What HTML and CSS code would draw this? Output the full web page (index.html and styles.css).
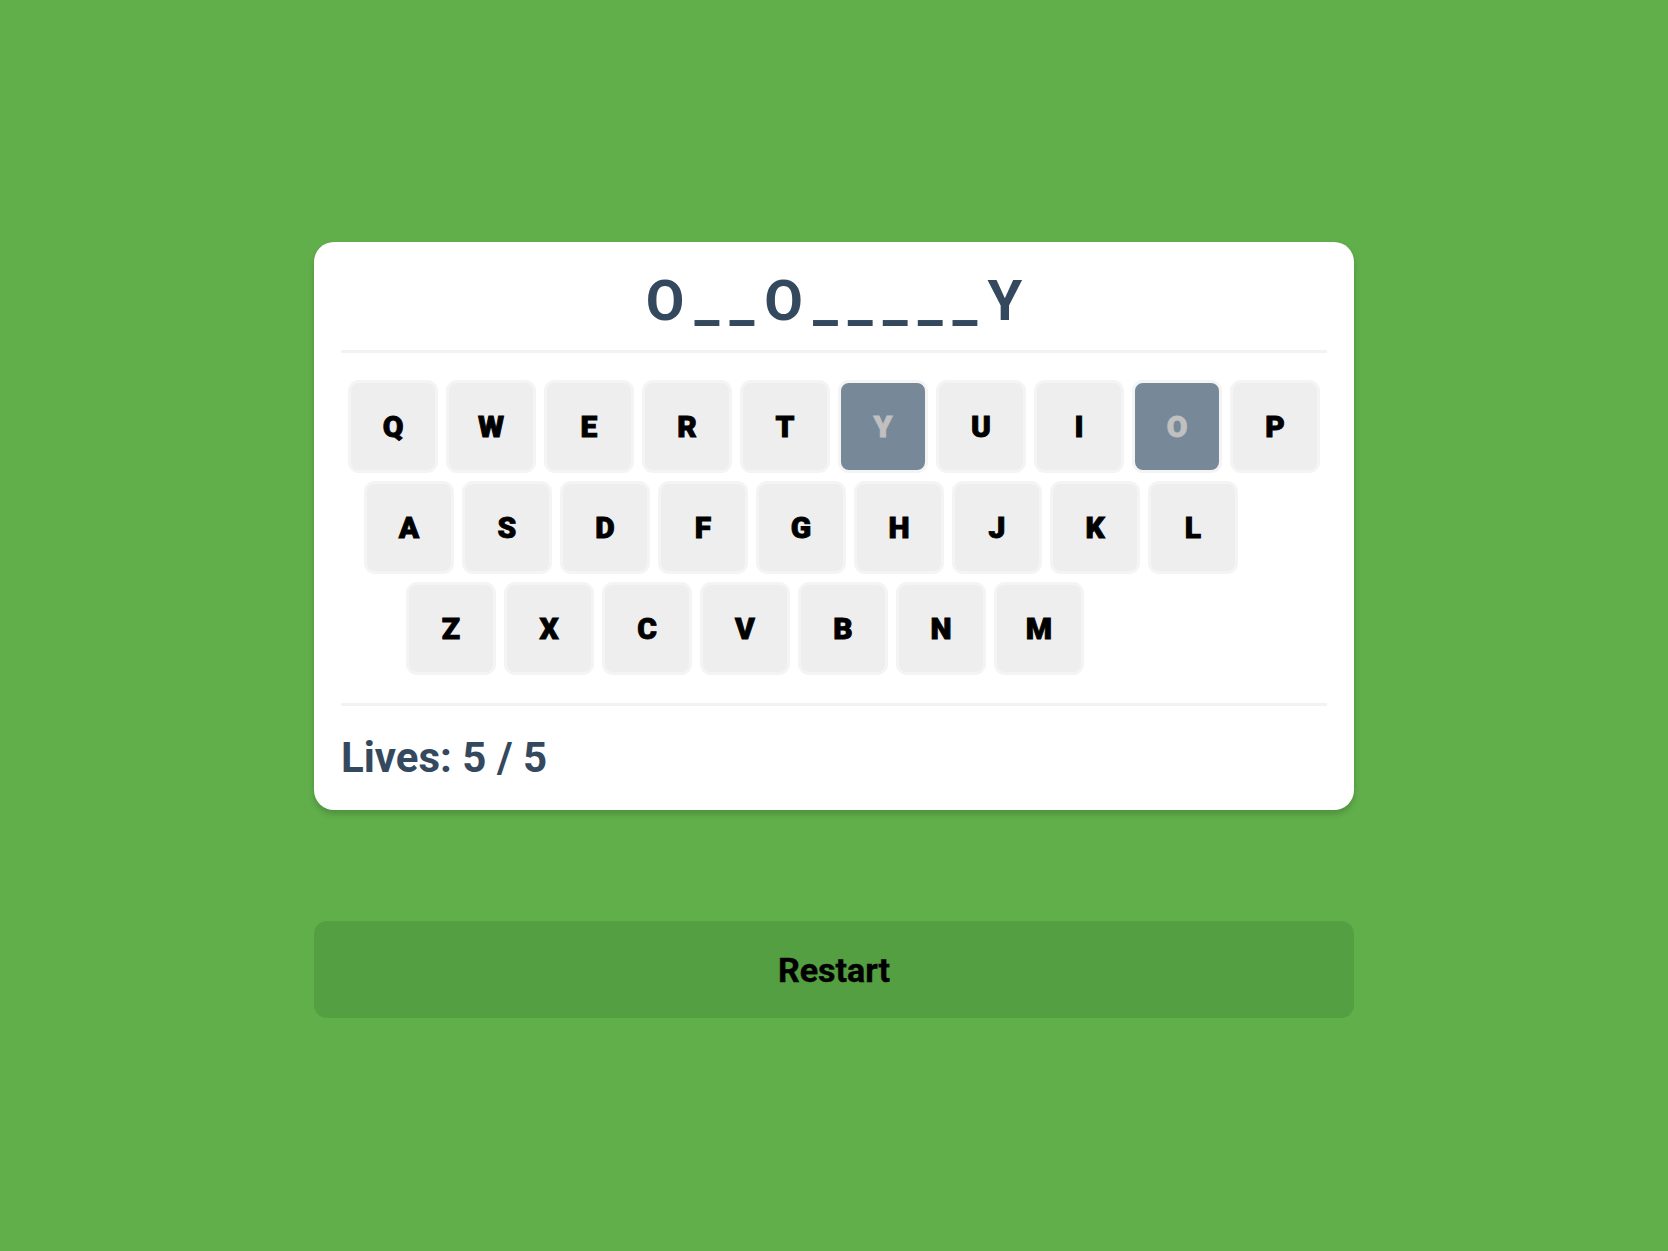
FILE: index.html
```html
<!DOCTYPE html>
<html lang="en">
<head>
<meta charset="utf-8">
<title>Hangman</title>
<link rel="stylesheet" href="styles.css">
</head>
<body>
<main class="app">
  <section class="card">
    <h1 class="word">O__O_____Y</h1>
    <hr class="divider">
    <div class="keyboard">
      <div class="row row-1">
        <button class="key">Q</button>
        <button class="key">W</button>
        <button class="key">E</button>
        <button class="key">R</button>
        <button class="key">T</button>
        <button class="key used">Y</button>
        <button class="key">U</button>
        <button class="key">I</button>
        <button class="key used">O</button>
        <button class="key">P</button>
      </div>
      <div class="row row-2">
        <button class="key">A</button>
        <button class="key">S</button>
        <button class="key">D</button>
        <button class="key">F</button>
        <button class="key">G</button>
        <button class="key">H</button>
        <button class="key">J</button>
        <button class="key">K</button>
        <button class="key">L</button>
      </div>
      <div class="row row-3">
        <button class="key">Z</button>
        <button class="key">X</button>
        <button class="key">C</button>
        <button class="key">V</button>
        <button class="key">B</button>
        <button class="key">N</button>
        <button class="key">M</button>
      </div>
    </div>
    <hr class="divider divider-bottom">
    <p class="lives">Lives: 5 / 5</p>
  </section>
  <button class="restart">Restart</button>
</main>
</body>
</html>
```
FILE: styles.css
```css
html, body {
  margin: 0;
  padding: 0;
}

body {
  background: #61af4b;
  font-family: Roboto, "Liberation Sans", Arial, sans-serif;
  min-height: 1251px;
}

.app {
  width: 1040px;
  margin: 0 auto;
  padding-top: 242px;
  display: flex;
  flex-direction: column;
}

.card {
  background: #ffffff;
  border-radius: 20px;
  padding: 27px;
  box-shadow: 0 4px 6px rgba(0, 0, 0, 0.18);
  display: flex;
  flex-direction: column;
}

.word {
  margin: 0 0 17px 0;
  font-size: 56px;
  line-height: 64px;
  height: 64px;
  font-weight: 700;
  color: #34495e;
  text-align: center;
  letter-spacing: 10px;
  padding-left: 10px;
}

.divider {
  margin: 0;
  border: 0;
  height: 3px;
  background: #f2f2f2;
}

.divider-bottom {
  margin-top: 28px;
}

.keyboard {
  margin-top: 27px;
  display: flex;
  flex-direction: column;
  gap: 8px;
}

.row {
  display: flex;
  gap: 8px;
}

.row-1 {
  margin-left: 7px;
}

.row-2 {
  margin-left: 23px;
}

.row-3 {
  margin-left: 65px;
}

.key {
  box-sizing: border-box;
  width: 90px;
  height: 93px;
  border: 3px solid #f4f4f4;
  border-radius: 11px;
  background: #eeeeee;
  color: #000000;
  font-family: Roboto, "Liberation Sans", Arial, sans-serif;
  font-size: 30px;
  font-weight: 900;
  -webkit-text-stroke: 0.9px currentColor;
  padding: 0;
  display: flex;
  align-items: center;
  justify-content: center;
}

.key.used {
  background: #778899;
  color: #c0c0c0;
}

.lives {
  margin: 27px 0 0 0;
  font-size: 42px;
  line-height: 50px;
  font-weight: 700;
  color: #34495e;
}

.restart {
  margin-top: 111px;
  height: 97px;
  border: 0;
  border-radius: 13px;
  background: #559f43;
  color: #000000;
  font-family: Roboto, "Liberation Sans", Arial, sans-serif;
  font-size: 34px;
  font-weight: 700;
  -webkit-text-stroke: 0.4px currentColor;
  padding: 0;
}
```
